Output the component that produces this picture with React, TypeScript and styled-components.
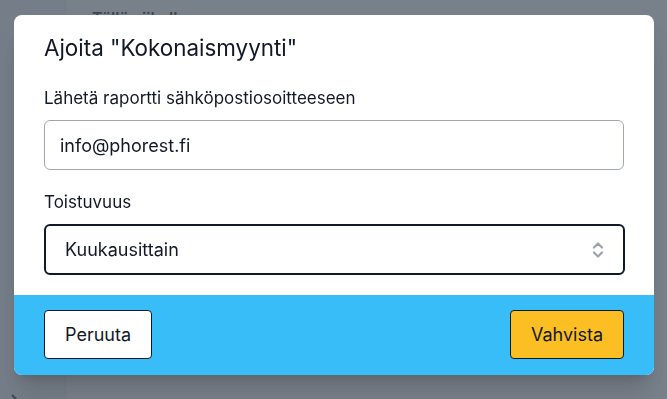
import React, { FC } from "react";
import styled, { createGlobalStyle } from "styled-components";

const GlobalStyle = createGlobalStyle`
  html, body {
    margin: 0;
    padding: 0;
    height: 100%;
    overflow: hidden;
  }
  body {
    font-family: Inter, "Noto Sans", "Liberation Sans", sans-serif;
    color: #111827;
  }
`;

const Page = styled.div`
  position: fixed;
  inset: 0;
  display: flex;
  background: #ffffff;
`;

const Sidebar = styled.aside`
  width: 65px;
  background: #f3f4f6;
  border-right: 1px solid #e5e7eb;
  display: flex;
  flex-direction: column;
  justify-content: flex-end;
  align-items: center;
  color: #374151;
`;

const Main = styled.main`
  flex: 1;
  padding: 8px 26px;
  font-size: 16px;
  font-weight: 600;
`;

const Overlay = styled.div`
  position: absolute;
  inset: 0;
  background: rgba(75, 85, 99, 0.75);
  display: flex;
  justify-content: center;
  align-items: flex-start;
  padding: 15px 13px 0 14px;
`;

const Modal = styled.div`
  width: 640px;
  background: #ffffff;
  border-radius: 8px;
  overflow: hidden;
  box-shadow: 0 20px 25px -5px rgba(0, 0, 0, 0.15),
    0 8px 10px -6px rgba(0, 0, 0, 0.12);
`;

const Body = styled.div`
  padding: 18px 30px 20px;
  display: flex;
  flex-direction: column;
`;

const Title = styled.h2`
  margin: 0 0 23px;
  font-size: 22.4px;
  line-height: 30px;
  font-weight: 400;
  color: #111827;
`;

const Label = styled.label`
  display: block;
  font-size: 17px;
  line-height: 24px;
  color: #111827;
  margin-bottom: 10px;
`;

const Field = styled.div<{ $gap?: number }>`
  margin-bottom: ${(p) => p.$gap ?? 0}px;
`;

const Input = styled.input`
  box-sizing: border-box;
  width: 580px;
  height: 50px;
  padding: 0 15px;
  border: 1px solid #a1a7b1;
  border-radius: 6px;
  font-family: inherit;
  font-size: 18px;
  color: #111827;
  outline: none;
`;

const SelectBox = styled.div`
  box-sizing: border-box;
  width: 581px;
  height: 51px;
  padding: 0 18px 0 19px;
  border: 2px solid #111827;
  border-radius: 6px;
  display: flex;
  align-items: center;
  justify-content: space-between;
  font-size: 18px;
`;

const Footer = styled.div`
  background: #38bdf8;
  height: 80px;
  box-sizing: border-box;
  padding: 15px 30px 16px;
  display: flex;
  justify-content: space-between;
  align-items: center;
`;

const Button = styled.button<{ $primary?: boolean }>`
  height: 49px;
  padding: 0 20px;
  border: 1px solid #111827;
  border-radius: 4px;
  background: ${(p) => (p.$primary ? "#fbbf24" : "#ffffff")};
  font-family: inherit;
  font-size: 18px;
  color: #111827;
  cursor: pointer;
`;

const Selector: FC = () => (
  <svg width="14" height="20" viewBox="0 0 14 20" fill="none">
    <path
      d="M3 7.5l4-4 4 4M3 12.5l4 4 4-4"
      stroke="#9ca3af"
      strokeWidth="2.2"
      strokeLinecap="round"
      strokeLinejoin="round"
    />
  </svg>
);

const App: FC = (): JSX.Element => {
  return (
    <>
      <GlobalStyle />
      <Page>
        <Sidebar>
          <svg width="14" height="14" viewBox="0 0 14 14" style={{ marginBottom: -8, marginLeft: -36 }}>
            <path d="M4 2l5 5-5 5" stroke="#1f2937" strokeWidth="2" fill="none" />
          </svg>
        </Sidebar>
        <Main>Tällä viikolla</Main>
      </Page>
      <Overlay>
        <Modal>
          <Body>
            <Title>Ajoita "Kokonaismyynti"</Title>
            <Field $gap={20}>
              <Label>Lähetä raportti sähköpostiosoitteeseen</Label>
              <Input defaultValue="info@phorest.fi" />
            </Field>
            <Field>
              <Label>Toistuvuus</Label>
              <SelectBox>
                <span>Kuukausittain</span>
                <Selector />
              </SelectBox>
            </Field>
          </Body>
          <Footer>
            <Button>Peruuta</Button>
            <Button $primary>Vahvista</Button>
          </Footer>
        </Modal>
      </Overlay>
    </>
  );
};

export default App;
